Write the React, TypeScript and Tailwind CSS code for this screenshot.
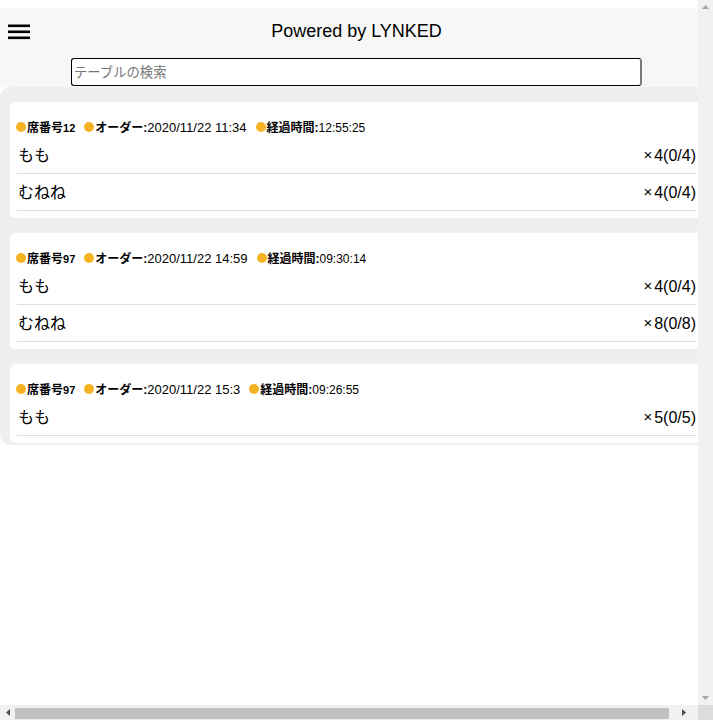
import React from "react";

type Order = {
  seat: string;
  order: string;
  elapsed: string;
  items: [string, string, string][];
};

const orders: Order[] = [
  {
    seat: "12",
    order: "2020/11/22 11:34",
    elapsed: "12:55:25",
    items: [
      ["もも", "4", "0/4"],
      ["むねね", "4", "0/4"],
    ],
  },
  {
    seat: "97",
    order: "2020/11/22 14:59",
    elapsed: "09:30:14",
    items: [
      ["もも", "4", "0/4"],
      ["むねね", "8", "0/8"],
    ],
  },
  {
    seat: "97",
    order: "2020/11/22 15:3",
    elapsed: "09:26:55",
    items: [["もも", "5", "0/5"]],
  },
];

function Dot() {
  return <span className="inline-block w-[10px] h-[10px] rounded-full bg-[#f5b324] shrink-0" />;
}

function Card({ o }: { o: Order }) {
  return (
    <div className="ml-[10px] bg-white rounded-[5px] pt-[15px] pb-[7px]">
      <div className="h-[20px] pl-[6px] flex items-center gap-[9px] text-black">
        <div className="flex items-center gap-px">
          <Dot />
          <span>
            <span className="text-[12px] font-bold">席番号</span>
            <span className="text-[11px] font-bold">{o.seat}</span>
          </span>
        </div>
        <div className="flex items-center gap-px">
          <Dot />
          <span>
            <span className="text-[12px] font-bold">オーダー:</span>
            <span className="text-[13px]">{o.order}</span>
          </span>
        </div>
        <div className="flex items-center gap-px">
          <Dot />
          <span>
            <span className="text-[12px] font-bold">経過時間:</span>
            <span className="text-[12px]">{o.elapsed}</span>
          </span>
        </div>
      </div>
      {o.items.map(([name, qty, frac], i) => (
        <div
          key={i}
          className="ml-[7px] mr-[17px] h-[37px] flex items-center justify-between border-b border-[#dddddd] pt-[1px] text-[16px] text-black"
        >
          <span className="pl-px">{name}</span>
          <span className="flex items-center">
            <span className="text-[15px]">×</span>
            <span className="ml-[2px]">
              {qty}({frac})
            </span>
          </span>
        </div>
      ))}
    </div>
  );
}

function VScrollbar() {
  return (
    <div className="bg-[#f1f1f1] flex flex-col justify-between items-center py-[5px]">
      <svg width="7" height="4" viewBox="0 0 7 4">
        <polygon points="3.5,0 7,4 0,4" fill="#a3a3a3" />
      </svg>
      <svg width="7" height="4" viewBox="0 0 7 4">
        <polygon points="0,0 7,0 3.5,4" fill="#a3a3a3" />
      </svg>
    </div>
  );
}

function HScrollbar() {
  return (
    <div className="bg-[#f1f1f1] flex items-center">
      <div className="w-[15px] h-full flex items-center justify-center">
        <svg width="4" height="7" viewBox="0 0 4 7">
          <polygon points="0,3.5 4,0 4,7" fill="#505050" />
        </svg>
      </div>
      <div className="w-[654px] h-[11px] bg-[#c1c1c1] mt-[2px]" />
      <div className="flex-1 h-full flex items-center justify-center">
        <svg width="4" height="7" viewBox="0 0 4 7">
          <polygon points="0,0 4,3.5 0,7" fill="#505050" />
        </svg>
      </div>
    </div>
  );
}

export default function App() {
  return (
    <div
      className="h-screen w-screen grid grid-cols-[698px_15px] grid-rows-[705px_15px] bg-white overflow-hidden"
      style={{ fontFamily: '"Liberation Sans", "Noto Sans CJK JP", Arial, sans-serif' }}
    >
      <div className="overflow-hidden">
        <div className="w-[713px] pt-2">
          <div className="bg-[#f7f7f7] pb-px">
            <div className="h-[47px] grid grid-cols-[1fr_auto_1fr] items-center">
              <div className="pl-[8px] flex items-center">
                <svg width="22" height="16" viewBox="0 0 22 16">
                  <rect x="0" y="0.5" width="22" height="2.6" fill="#000" />
                  <rect x="0" y="6.5" width="22" height="2.6" fill="#000" />
                  <rect x="0" y="12.5" width="22" height="2.6" fill="#000" />
                </svg>
              </div>
              <div className="text-[18px] text-black">Powered by LYNKED</div>
              <div />
            </div>
            <div className="mt-[3px] flex justify-center">
              <input
                type="text"
                placeholder="テーブルの検索"
                className="w-[571px] h-[28px] bg-white border border-black border-r-2 border-r-[#7a7a7a] rounded-[3px] px-[2px] text-[13.33px] placeholder:text-[#757575] outline-none"
                style={{ fontFamily: '"Liberation Sans", "Noto Sans CJK JP", sans-serif' }}
              />
            </div>
          </div>
          <div className="bg-[#efefef] rounded-[10px] pt-[15px] pb-[2px] flex flex-col gap-[15px]">
            {orders.map((o, i) => (
              <Card key={i} o={o} />
            ))}
          </div>
        </div>
      </div>
      <VScrollbar />
      <HScrollbar />
      <div className="bg-[#dcdcdc]" />
    </div>
  );
}
